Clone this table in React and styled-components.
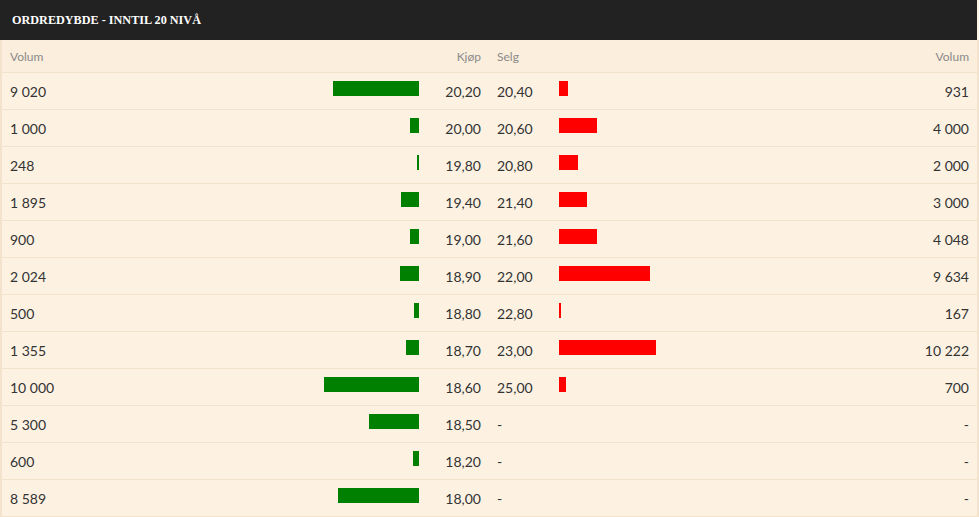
import React from 'react'
import styled, { createGlobalStyle } from 'styled-components'

const Global = createGlobalStyle`
  body {
    margin: 0;
    background: #fff;
    font-family: 'Lato', 'Open Sans', sans-serif;
  }
`

const Panel = styled.div`
  width: 979px;
  background: #fdf2e2;
`

const Title = styled.div`
  width: 965px;
  height: 40px;
  background: #222;
  color: #fff;
  display: flex;
  align-items: center;
  padding-left: 12px;
  font-family: 'Liberation Serif', 'DejaVu Serif', serif;
  font-weight: bold;
  font-size: 12.2px;
`

const Table = styled.div`
  border-left: 2px solid #f3e3cc;
  border-right: 2px solid #f3e3cc;
`

const Row = styled.div`
  display: grid;
  grid-template-columns: 198px 227px 62px 62px 199px 1fr;
  height: ${({ head }) => (head ? '32px' : '36px')};
  background: ${({ head }) => (head ? '#fbeedc' : '#fdf2e2')};
  border-bottom: 1px solid #f3e3cc;
  color: ${({ head }) => (head ? '#8a8a8a' : '#333')};
  font-size: ${({ head }) => (head ? '12px' : '14px')};
`

const Cell = styled.div`
  display: flex;
  align-items: center;
  padding: 0 8px;
  justify-content: ${({ right }) => (right ? 'flex-end' : 'flex-start')};
`

const Bar = styled.div`
  height: 15px;
  margin-top: -6px;
  background: ${({ buy }) => (buy ? '#008000' : '#ff0000')};
`

const buys = [
  [9020, '20,20'],
  [1000, '20,00'],
  [248, '19,80'],
  [1895, '19,40'],
  [900, '19,00'],
  [2024, '18,90'],
  [500, '18,80'],
  [1355, '18,70'],
  [10000, '18,60'],
  [5300, '18,50'],
  [600, '18,20'],
  [8589, '18,00'],
]

const sells = [
  ['20,40', 931],
  ['20,60', 4000],
  ['20,80', 2000],
  ['21,40', 3000],
  ['21,60', 4048],
  ['22,00', 9634],
  ['22,80', 167],
  ['23,00', 10222],
  ['25,00', 700],
]

const MAX = 10222
const fmt = (n) => String(n).replace(/\B(?=(\d{3})+(?!\d))/g, ' ')
const w = (n) => (n / MAX) * 97

export default function App() {
  return (
    <Panel>
      <Global />
      <Title>ORDREDYBDE - INNTIL 20 NIVÅ</Title>
      <Table>
        <Row head>
          <Cell>Volum</Cell>
          <Cell />
          <Cell right>Kjøp</Cell>
          <Cell>Selg</Cell>
          <Cell />
          <Cell right>Volum</Cell>
        </Row>
        {buys.map(([bv, bp], i) => {
          const s = sells[i]
          return (
            <Row key={i}>
              <Cell>{fmt(bv)}</Cell>
              <Cell right>
                <Bar buy style={{ width: w(bv) }} />
              </Cell>
              <Cell right>{bp}</Cell>
              <Cell>{s ? s[0] : '-'}</Cell>
              <Cell>{s ? <Bar style={{ width: w(s[1]) }} /> : null}</Cell>
              <Cell right>{s ? fmt(s[1]) : '-'}</Cell>
            </Row>
          )
        })}
      </Table>
    </Panel>
  )
}
